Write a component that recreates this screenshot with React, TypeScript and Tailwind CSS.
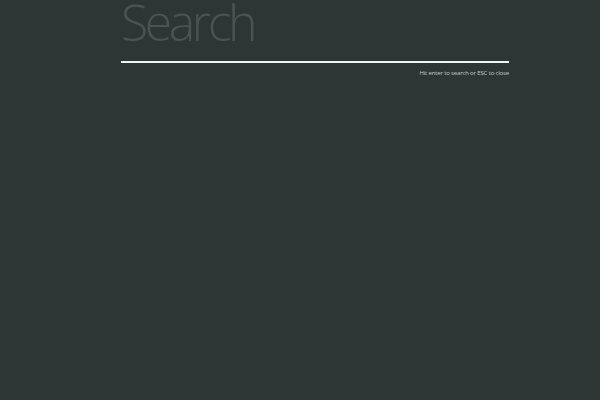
export default function App() {
  return (
    <div className="min-h-screen w-full bg-[#2d3635]" style={{ fontFamily: '"Open Sans", sans-serif' }}>
      <div className="ml-[121px] w-[388px]">
        <input
          type="text"
          placeholder="Search"
          className="block h-[61px] w-full bg-transparent p-0 pb-[18px] text-[50px] font-light leading-[43px] tracking-[-3.5px] text-white outline-none placeholder:text-[#4a5352]"
          style={{ fontFamily: '"Open Sans", sans-serif' }}
        />
        <div className="h-[2px] w-full bg-[#f2f2f2]" />
        <p className="mt-[6px] text-right text-[6px] leading-[9px] tracking-[-0.15px] text-[#c5cac9]">
          Hit enter to search or ESC to close
        </p>
      </div>
    </div>
  );
}
